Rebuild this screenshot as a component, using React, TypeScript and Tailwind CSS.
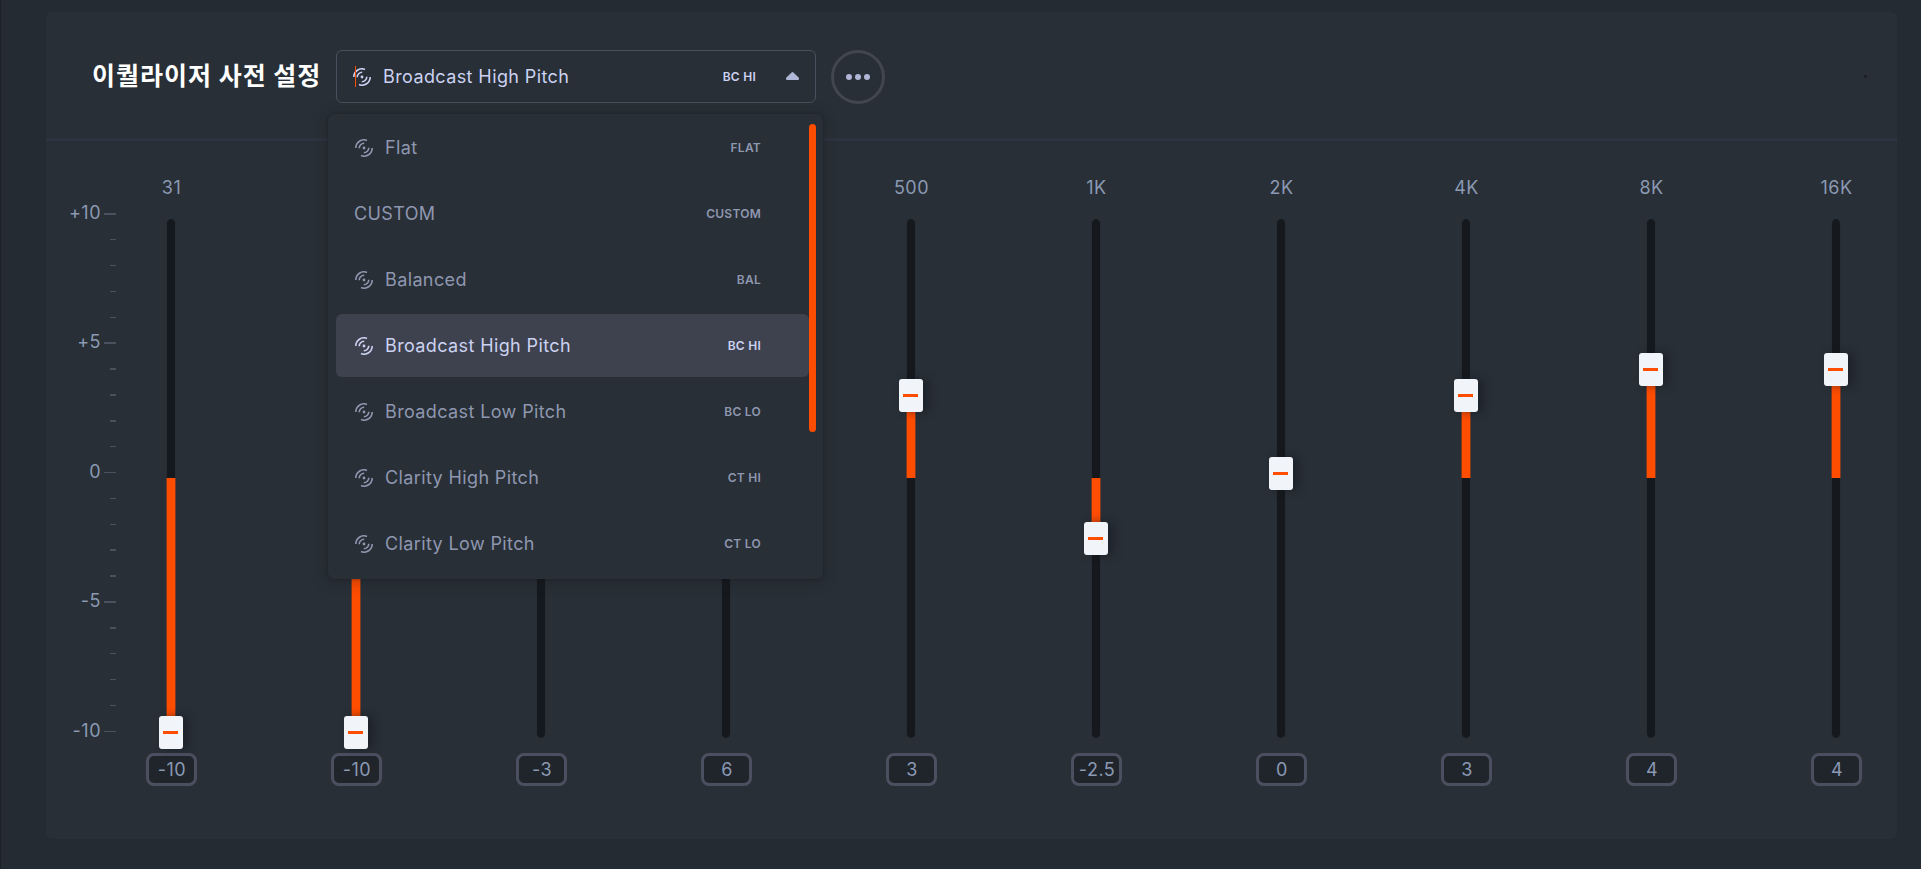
type Preset = {
  name: string;
  code: string;
  custom?: boolean;
};

type Band = {
  label: string;
  value: number;
};

const PRESETS: Preset[] = [
  { name: 'Flat', code: 'FLAT' },
  { name: 'CUSTOM', code: 'CUSTOM', custom: true },
  { name: 'Balanced', code: 'BAL' },
  { name: 'Broadcast High Pitch', code: 'BC HI' },
  { name: 'Broadcast Low Pitch', code: 'BC LO' },
  { name: 'Clarity High Pitch', code: 'CT HI' },
  { name: 'Clarity Low Pitch', code: 'CT LO' },
];

const SELECTED = 'Broadcast High Pitch';

const BANDS: Band[] = [
  { label: '31', value: -10 },
  { label: '62', value: -10 },
  { label: '125', value: -3 },
  { label: '250', value: 6 },
  { label: '500', value: 3 },
  { label: '1K', value: -2.5 },
  { label: '2K', value: 0 },
  { label: '4K', value: 3 },
  { label: '8K', value: 4 },
  { label: '16K', value: 4 },
];

// Row height of each scale mark, +10 down to -10. Heavy marks are 2px.
const SCALE = [
  { db: 10, h: 26, heavy: true },
  { db: 9, h: 26, heavy: false },
  { db: 8, h: 26, heavy: false },
  { db: 7, h: 26, heavy: false },
  { db: 6, h: 25, heavy: false },
  { db: 5, h: 26, heavy: true },
  { db: 4, h: 26, heavy: true },
  { db: 3, h: 26, heavy: true },
  { db: 2, h: 26, heavy: true },
  { db: 1, h: 26, heavy: false },
  { db: 0, h: 26, heavy: false },
  { db: -1, h: 26, heavy: false },
  { db: -2, h: 25, heavy: false },
  { db: -3, h: 26, heavy: true },
  { db: -4, h: 26, heavy: true },
  { db: -5, h: 26, heavy: true },
  { db: -6, h: 26, heavy: true },
  { db: -7, h: 26, heavy: false },
  { db: -8, h: 26, heavy: false },
  { db: -9, h: 26, heavy: false },
  { db: -10, h: 26, heavy: false },
];

const STEP = 25.92;

function PresetIcon() {
  return (
    <svg viewBox="0 0 18 18" className="h-[18px] w-[18px] shrink-0" fill="none" stroke="currentColor" strokeWidth="1.6">
      <path d="M0.8 9A8.2 8.2 0 0 1 12 1.4" />
      <path d="M4.2 9.2A4.9 4.9 0 0 1 9.2 4.3" />
      <path d="M17.2 9A8.2 8.2 0 0 1 6 16.6" />
      <path d="M13.8 8.8A4.9 4.9 0 0 1 8.8 13.7" />
      <circle cx="9" cy="9" r="1.4" fill="currentColor" stroke="none" />
    </svg>
  );
}

function PresetMenu() {
  return (
    <div className="absolute -left-[9px] top-[63px] z-10 ml-px mt-px h-[465px] w-[495px] rounded-md bg-[#282f36] pl-2 pt-0.5 shadow-[0_2px_16px_rgba(20,24,30,0.3),0_0_3px_rgba(20,24,30,0.45)]">
      <ul className="flex w-[473px] flex-col gap-[3px]">
        {PRESETS.map((p) => (
          <li
            key={p.name}
            className={`flex h-[63px] items-center rounded-md pl-[18px] pr-12 ${
              p.name === SELECTED ? 'bg-[#3e424f] text-[#ccd2f2]' : 'text-[#8f97b0]'
            }`}
          >
            {!p.custom && (
              <span className="mr-3 pl-px">
                <PresetIcon />
              </span>
            )}
            <span className="text-[18px] tracking-[0.38px]">{p.name}</span>
            <span className="ml-auto text-[12px] font-semibold tracking-[0.25px]">{p.code}</span>
          </li>
        ))}
      </ul>
      <div className="absolute left-[481px] top-[10px] h-[308px] w-[7px] rounded-full bg-[#ff4d00]" />
    </div>
  );
}

function PresetSelect() {
  return (
    <div className="relative h-[53px] w-[480px]">
      <button className="flex h-full w-full items-center rounded-md border border-[#4a4f5e] pl-4 pr-4 text-[#ccd2f2]">
        <span className="relative">
          <PresetIcon />
          <span className="absolute -top-0.5 left-0.5 h-[21px] w-px bg-[#ff4d00]" />
        </span>
        <span className="ml-3 text-[18px] tracking-[0.4px]">{SELECTED}</span>
        <span className="ml-auto mr-[30px] text-[12px] font-semibold tracking-[0.25px]">BC HI</span>
        <svg viewBox="0 0 13 8" className="mb-0.5 h-2 w-[13px]" fill="#b0b7d6">
          <path d="M5.6.5a1.3 1.3 0 0 1 1.8 0l5.2 5A1.4 1.4 0 0 1 11.7 8H1.3A1.4 1.4 0 0 1 .4 5.5z" />
        </svg>
      </button>
      <PresetMenu />
    </div>
  );
}

function Scale() {
  return (
    <div className="mt-[72px] flex w-[70px] shrink-0 flex-col">
      {SCALE.map((s) => (
        <div key={s.db} className="flex items-start justify-end" style={{ height: s.h }}>
          {s.db % 5 === 0 && (
            <span className="-mt-[13px] mr-[3px] text-[18px] leading-[26px] tracking-[0.5px] text-[#8b99b3]">
              {s.db > 0 ? `+${s.db}` : s.db}
            </span>
          )}
          <span
            className={`bg-[#4b515f] ${s.heavy ? 'h-0.5' : 'h-px'} ${s.db % 5 === 0 ? 'w-3' : 'w-1.5'}`}
          />
        </div>
      ))}
    </div>
  );
}

function BandSlider({ label, value }: Band) {
  const fill = Math.abs(value) * STEP;
  return (
    <div className="flex w-[185px] shrink-0 flex-col items-center pt-[34px] tracking-[0.5px] text-[#8b99b3]">
      <div className="h-[26px] pl-0.5 text-[18px] leading-[26px]">{label}</div>
      <div className="relative mt-[18px] h-[519px] w-[10px] rounded-full border-x border-[#262d34] bg-[#15191d]">
        <div
          className="absolute -inset-x-px border-x border-[#7d3a20] bg-[#ff4d00]"
          style={value > 0 ? { top: 259 - fill, height: fill } : { top: 259, height: fill - 5 > 0 ? fill - 5 : 0 }}
        />
        <div
          className="absolute -left-2 h-[33px] w-6 rounded-[3px] bg-[#f1f4f9] shadow-[5px_0_8px_rgba(20,24,32,0.55)]"
          style={{ top: Math.round(238 - value * STEP) }}
        >
          <div className="ml-1 mt-[15px] h-[3px] w-[15px] bg-[#ff4d00]" />
        </div>
      </div>
      <div className="ml-px mt-[15px] flex h-[33px] w-[51px] items-center justify-center rounded-lg border-[3px] border-[#4b5060] bg-[#1f252b] pl-0.5 text-[18px]">
        {value}
      </div>
    </div>
  );
}

export default function App() {
  return (
    <div className="h-[869px] w-[1921px] overflow-hidden border-l border-[#1c2228] bg-[#242b32] pl-[45px] pt-3 font-['Inter','Noto_Sans_CJK_KR',sans-serif]">
      <section className="h-[827px] w-[1851px] rounded-md bg-[#282f36]">
        <header className="flex h-[129px] items-start border-b-[3px] border-[#2d343f] pl-[46px] pt-[38px]">
          <h1 className="h-[53px] w-[244px] whitespace-nowrap font-['Noto_Sans_CJK_KR',sans-serif] text-[25px] font-bold leading-[49px] tracking-[1px] text-white">
            이퀄라이저 사전 설정
          </h1>
          <PresetSelect />
          <button className="ml-[15px] flex h-[54px] w-[54px] items-center justify-center gap-[3px] rounded-full border-[3px] border-[#41464f]">
            <span className="h-1.5 w-1.5 rounded-full bg-[#b0b7d6]" />
            <span className="h-1.5 w-1.5 rounded-full bg-[#b0b7d6]" />
            <span className="h-1.5 w-1.5 rounded-full bg-[#b0b7d6]" />
          </button>
          <span className="ml-auto mr-[30px] mt-[25px] h-[3px] w-[3px] rounded-full bg-[#191e23]" />
        </header>
        <div className="flex">
          <Scale />
          <div className="-ml-[38px] flex">
            {BANDS.map((b) => (
              <BandSlider key={b.label} {...b} />
            ))}
          </div>
        </div>
      </section>
    </div>
  );
}
